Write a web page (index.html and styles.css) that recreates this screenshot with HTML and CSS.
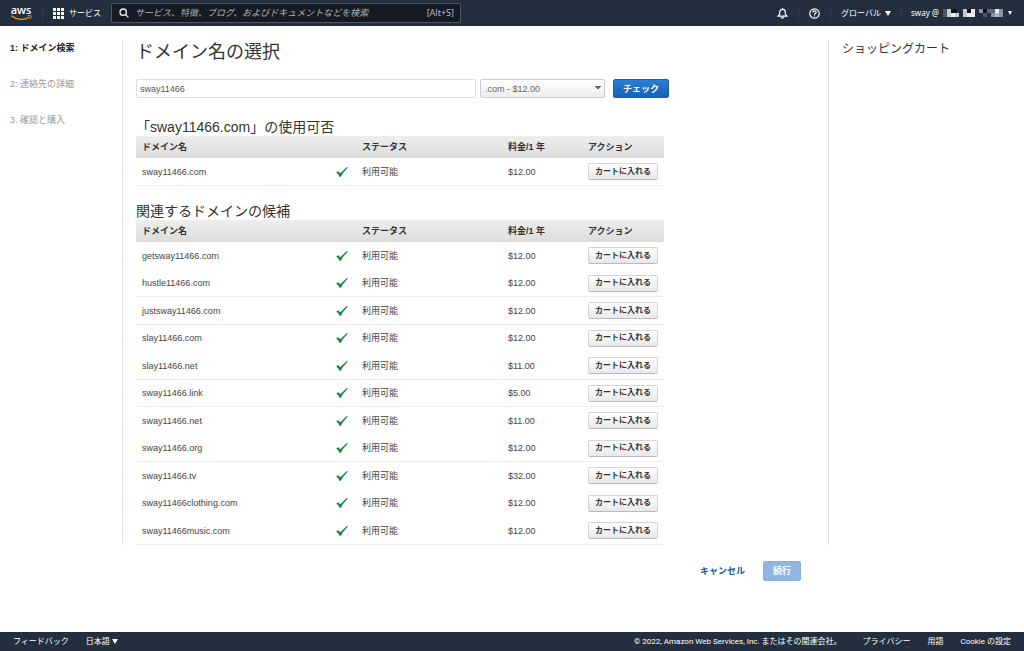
FILE: index.html
```
<!DOCTYPE html>
<html lang="ja">
<head>
<meta charset="utf-8">
<title>ドメイン名の選択</title>
<link rel="stylesheet" href="styles.css">
</head>
<body>
<svg class="defs" width="0" height="0" aria-hidden="true">
  <symbol id="check" viewBox="0 0 12 10"><path d="M.2 5.400 2.200 4.200 4.300 6.300 10.600.2H12L6.200 7 5 9.800H3.600L2.400 7.500Z" fill="#12853a"/></symbol>
</svg>
<header class="topbar">
  <a class="logo" href="#" aria-label="aws">
    <span class="logo-text">aws</span>
    <svg class="logo-smile" width="21" height="6" viewBox="0 0 21 6" aria-hidden="true">
      <path d="M.8 1C6 5.300 13.500 5.400 18 2.300" fill="none" stroke="#f59a23" stroke-width="1.300" stroke-linecap="round"/>
      <path d="M16.500.9C18 .3 19.500.2 20 .7 20.400 1.300 19.900 3 18.900 4.200" fill="none" stroke="#f59a23" stroke-width="1"/>
    </svg>
  </a>
  <button class="services" type="button">
    <svg width="11" height="11" viewBox="0 0 11 11" fill="#fff" aria-hidden="true">
      <path d="M0 0h3v3H0zM4 0h3v3H4zM8 0h3v3H8zM0 4h3v3H0zM4 4h3v3H4zM8 4h3v3H8zM0 8h3v3H0zM4 8h3v3H4zM8 8h3v3H8z"/>
    </svg>
    サービス
  </button>
  <label class="search">
    <svg width="10" height="10" viewBox="0 0 10 10" fill="none" stroke="#e8eaec" stroke-width="1.300" aria-hidden="true"><circle cx="4.200" cy="4.200" r="3.200"/><path d="m6.600 6.600 2.800 2.800"/></svg>
    <input type="search" aria-label="検索" placeholder="サービス、特徴、ブログ、およびドキュメントなどを検索">
    <span class="shortcut">[Alt+S]</span>
  </label>
  <nav class="tools" aria-label="アカウント">
    <button class="tool icon" type="button" aria-label="通知">
      <svg width="11" height="11" viewBox="0 0 11 11" fill="none" stroke="#fff" stroke-width="1.200" aria-hidden="true"><path d="M1 8.200 2.700 6V4.200a2.800 2.800 0 0 1 5.600 0V6L10 8.200ZM5.500 0v1.500M4 9c.3 1.500 2.700 1.500 3 0"/></svg>
    </button>
    <button class="tool icon" type="button" aria-label="ヘルプ">
      <svg width="11" height="11" viewBox="0 0 11 11" fill="none" stroke="#fff" stroke-width="1.200" aria-hidden="true"><circle cx="5.500" cy="5.500" r="4.700"/><path d="M3.900 4.400c0-2.100 3.300-2 3.300-.1C7.200 5.400 5.500 5.400 5.500 6.700M5.500 7.500v1.100"/></svg>
    </button>
    <button class="tool region" type="button">グローバル <span class="caret"></span></button>
    <button class="tool account" type="button">sway @
      <svg width="61" height="8" viewBox="0 0 61 8" shape-rendering="crispEdges" aria-hidden="true">
        <path fill="#4b5666" d="M0 0h4v8H0zM40 4h4v4h-4z"/>
        <path fill="#c9ced5" d="M4 0h4v8H4zM12 4h4v4h-4zM20 0h4v8h-4z"/>
        <path fill="#10131f" d="M8 0h6v4H8zM24 0h4v4h-4zM40 0h4v4h-4z"/>
        <path fill="#e9ebee" d="M8 4h4v4H8zM24 4h8v4h-8zM28 0h4v4h-4zM52 0h4v4h-4z"/>
        <path fill="#8b94a0" d="M36 0h4v4h-4zM48 4h4v4h-4zM56 0h4v8h-4z"/>
        <path fill="#5c6675" d="M44 0h8v4h-8z"/>
        <path fill="#b3bac3" d="M52 4h4v4h-4z"/>
      </svg>
      <span class="caret small"></span></button>
  </nav>
</header>

<main class="page">
  <div class="columns">
    <ol class="steps">
      <li class="current">1: ドメイン検索</li>
      <li>2: 連絡先の詳細</li>
      <li>3. 確認と購入</li>
    </ol>
    <section class="content">
      <h1>ドメイン名の選択</h1>
      <form class="query">
        <input class="domain" type="text" aria-label="ドメイン名" value="sway11466">
        <select class="tld" aria-label="トップレベルドメイン"><option>.com - $12.00</option></select>
        <button class="primary" type="button">チェック</button>
      </form>

      <h2 class="quoted">「sway11466.com」の使用可否</h2>
      <table class="domains">
        <thead><tr><th class="name">ドメイン名</th><th class="mark"></th><th class="status">ステータス</th><th class="price">料金/1 年</th><th>アクション</th></tr></thead>
        <tbody>
          <tr class="ruled"><td>sway11466.com</td><td><svg class="check"><use href="#check"/></svg></td><td>利用可能</td><td>$12.00</td><td><button class="add" type="button">カートに入れる</button></td></tr>
        </tbody>
      </table>

      <h2>関連するドメインの候補</h2>
      <table class="domains">
        <thead><tr><th class="name">ドメイン名</th><th class="mark"></th><th class="status">ステータス</th><th class="price">料金/1 年</th><th>アクション</th></tr></thead>
        <tbody>
          <tr><td>getsway11466.com</td><td><svg class="check"><use href="#check"/></svg></td><td>利用可能</td><td>$12.00</td><td><button class="add" type="button">カートに入れる</button></td></tr>
          <tr class="ruled"><td>hustle11466.com</td><td><svg class="check"><use href="#check"/></svg></td><td>利用可能</td><td>$12.00</td><td><button class="add" type="button">カートに入れる</button></td></tr>
          <tr class="ruled"><td>justsway11466.com</td><td><svg class="check"><use href="#check"/></svg></td><td>利用可能</td><td>$12.00</td><td><button class="add" type="button">カートに入れる</button></td></tr>
          <tr><td>slay11466.com</td><td><svg class="check"><use href="#check"/></svg></td><td>利用可能</td><td>$12.00</td><td><button class="add" type="button">カートに入れる</button></td></tr>
          <tr class="ruled"><td>slay11466.net</td><td><svg class="check"><use href="#check"/></svg></td><td>利用可能</td><td>$11.00</td><td><button class="add" type="button">カートに入れる</button></td></tr>
          <tr class="ruled"><td>sway11466.link</td><td><svg class="check"><use href="#check"/></svg></td><td>利用可能</td><td>$5.00</td><td><button class="add" type="button">カートに入れる</button></td></tr>
          <tr><td>sway11466.net</td><td><svg class="check"><use href="#check"/></svg></td><td>利用可能</td><td>$11.00</td><td><button class="add" type="button">カートに入れる</button></td></tr>
          <tr class="ruled"><td>sway11466.org</td><td><svg class="check"><use href="#check"/></svg></td><td>利用可能</td><td>$12.00</td><td><button class="add" type="button">カートに入れる</button></td></tr>
          <tr><td>sway11466.tv</td><td><svg class="check"><use href="#check"/></svg></td><td>利用可能</td><td>$32.00</td><td><button class="add" type="button">カートに入れる</button></td></tr>
          <tr><td>sway11466clothing.com</td><td><svg class="check"><use href="#check"/></svg></td><td>利用可能</td><td>$12.00</td><td><button class="add" type="button">カートに入れる</button></td></tr>
          <tr class="ruled"><td>sway11466music.com</td><td><svg class="check"><use href="#check"/></svg></td><td>利用可能</td><td>$12.00</td><td><button class="add" type="button">カートに入れる</button></td></tr>
        </tbody>
      </table>
    </section>
    <aside class="cart"><h2 class="cart-title">ショッピングカート</h2></aside>
  </div>
  <div class="actions">
    <a href="#">キャンセル</a>
    <button class="primary" type="button" disabled>続行</button>
  </div>
</main>

<footer class="footer">
  <a href="#">フィードバック</a>
  <button type="button">日本語 <span class="caret"></span></button>
  <span class="copyright">© 2022, Amazon Web Services, Inc. またはその関連会社。</span>
  <a href="#">プライバシー</a>
  <a href="#">用語</a>
  <a href="#">Cookie の設定</a>
</footer>
</body>
</html>
```
FILE: styles.css
```
* { box-sizing: border-box; }

body {
  margin: 0;
  min-height: 100vh;
  display: flex;
  flex-direction: column;
  background: #fff;
  color: #444;
  font: 9px/12px "Liberation Sans", "Noto Sans CJK JP", sans-serif;
}

button, input, select { font: inherit; color: inherit; margin: 0; }
button { padding: 0; border: 0; background: none; white-space: nowrap; }
a { color: inherit; text-decoration: none; }
h1, h2 { margin: 0; font-weight: 400; color: #333; }
.defs { position: absolute; }

.caret {
  display: inline-block;
  border: 3px solid transparent;
  border-top: 5px solid #fff;
  border-bottom: 0;
}
.caret.small { border-width: 4px 2px 0; }

/* Top bar */
.topbar {
  display: flex;
  align-items: center;
  height: 26px;
  background: #232f3e;
  color: #fff;
  font-family: "Noto Sans", "Noto Sans CJK JP", sans-serif;
}
.logo {
  display: flex;
  flex-direction: column;
  align-items: center;
  width: 43px;
  height: 16px;
  border-right: 1px solid #303c4b;
}
.logo-text { font: 600 11px/9px "Open Sans", sans-serif; }
.logo-smile { margin-top: 1px; }
.services { display: flex; align-items: center; gap: 5px; padding: 0 10px; font-size: 8px; }
.search {
  display: flex;
  align-items: center;
  gap: 6px;
  flex: 0 1 350px;
  height: 20px;
  padding: 0 6px 0 7px;
  border: 1px solid #4d5763;
  border-radius: 1px;
  background: #161b23;
  color: #b4babf;
}
.search input {
  flex: 1;
  min-width: 0;
  padding: 0;
  border: 0;
  outline: 0;
  background: none;
}
.search input::placeholder { color: #aab1b7; font-style: italic; opacity: 1; }
.tools { display: flex; align-items: center; margin-left: auto; padding-right: 12px; }
.tool { display: flex; align-items: center; height: 14px; }
.tool + .tool { border-left: 1px solid #303c4b; }
.icon { width: 32px; justify-content: center; }
.region { gap: 4px; padding: 0 10px; font-size: 8px; }
.account { gap: 4px; padding-left: 9px; font-size: 8px; }

/* Page columns */
.page { flex: 1; }
.columns {
  display: grid;
  grid-template-columns: 123px 1fr 196px;
  padding-top: 14px;
}
.steps {
  margin: 0;
  padding: 2px 10px 0;
  list-style: none;
  border-right: 1px solid #ddd;
  color: #999;
}
.steps li { height: 36px; }
.steps .current { color: #222; font-weight: 700; }
.content { padding-left: 13px; }
.content h1 { font-size: 18px; line-height: 24px; }
.content h2 { font-size: 14px; line-height: 18px; margin-top: 16px; }
.content .quoted { margin-top: 20px; }
.cart { padding: 2px 13px; border-left: 1px solid #ddd; }
.cart-title { font-size: 12px; line-height: 14px; }

/* Search form */
.query { display: flex; gap: 4px; margin-top: 15px; width: 533px; max-width: 100%; }
.domain {
  flex: 1;
  min-width: 0;
  height: 19px;
  padding: 0 3px;
  border: 1px solid #ddd;
  border-radius: 2px;
  color: #555;
}
.tld {
  appearance: none;
  flex: 0 0 125px;
  height: 19px;
  padding: 0 4px;
  border: 1px solid #ccc;
  border-radius: 2px;
  color: #666;
  background:
    linear-gradient(to top right, transparent 50%, #666 50%) right 6px top 6px / 3px 4px no-repeat,
    linear-gradient(to top left, transparent 50%, #666 50%) right 3px top 6px / 3px 4px no-repeat,
    linear-gradient(#fff, #eee);
}
.primary {
  height: 19px;
  padding: 0 9px;
  border: 1px solid #1b5fae;
  border-radius: 2px;
  background: linear-gradient(#2b7dd4, #1563b8);
  color: #fff;
  font-weight: 700;
}
.query .primary { margin-left: 4px; }
.primary:disabled { height: 20px; border-color: #85afdd; background: #8fb6df; }

/* Domain tables */
.domains {
  width: 528px;
  max-width: 100%;
  table-layout: fixed;
  border-spacing: 0;
}
.domains th, .domains td { padding: 0 6px; text-align: left; vertical-align: middle; }
.domains th {
  height: 22px;
  background: linear-gradient(#eee, #dcdcdc);
  color: #333;
  font-weight: 700;
}
.domains td { height: 28px; padding-bottom: 1px; }
.domains tr:nth-child(even) td { height: 27px; }
.domains .ruled td { padding-bottom: 0; border-bottom: 1px solid #eee; }
.name { width: 194px; }
.mark { width: 26px; }
.status { width: 146px; }
.price { width: 80px; }
.check { display: block; width: 12px; height: 10px; }
.add {
  display: block;
  height: 17px;
  padding: 0 6px;
  border: 1px solid #d5d5d5;
  border-bottom-color: #bbb;
  border-radius: 2px;
  background: linear-gradient(#fff, #e8e8e8);
  color: #333;
  font-size: 8px;
  font-weight: 700;
}

.actions {
  display: flex;
  align-items: center;
  justify-content: flex-end;
  gap: 18px;
  padding: 16px 223px 15px 16px;
}
.actions a { color: #145a9c; font-weight: 700; }

/* Footer */
.footer {
  display: flex;
  align-items: center;
  height: 19px;
  padding: 0 13px;
  gap: 17px;
  background: #232f3e;
  color: #fff;
  font: 400 8px/12px Roboto, "Noto Sans CJK JP", sans-serif;
}
.copyright { margin: 0 4px 0 auto; }
```
